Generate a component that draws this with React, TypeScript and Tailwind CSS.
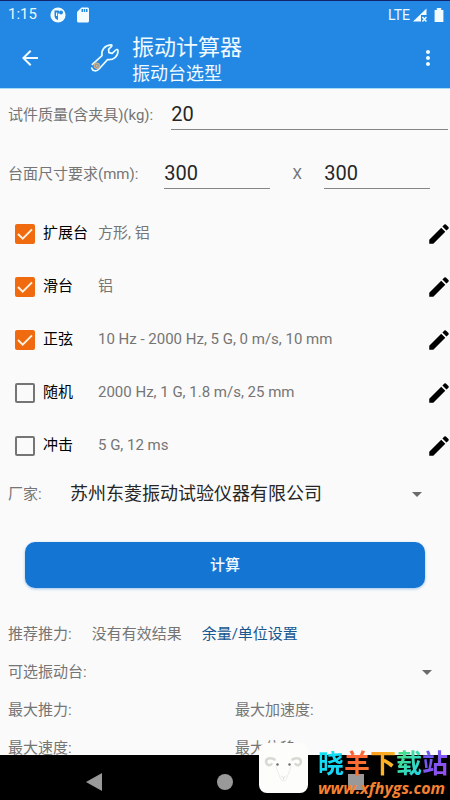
import { useState } from "react";
import { MdArrowBack, MdEdit, MdMoreVert, MdSdCard } from "react-icons/md";

type TestItem = {
  id: string;
  name: string;
  params: string;
  checked: boolean;
};

const initialItems: TestItem[] = [
  { id: "expander", name: "扩展台", params: "方形, 铝", checked: true },
  { id: "slip", name: "滑台", params: "铝", checked: true },
  {
    id: "sine",
    name: "正弦",
    params: "10 Hz - 2000 Hz, 5 G, 0 m/s, 10 mm",
    checked: true,
  },
  {
    id: "random",
    name: "随机",
    params: "2000 Hz, 1 G, 1.8 m/s, 25 mm",
    checked: false,
  },
  { id: "shock", name: "冲击", params: "5 G, 12 ms", checked: false },
];

const siteName = [
  { char: "晓", color: "from-[#12e4f6] to-[#18d0f4]" },
  { char: "羊", color: "from-[#ff5a3c] to-[#fb7c28]" },
  { char: "下", color: "from-[#ff9a1e] to-[#f7c52a]" },
  { char: "载", color: "from-[#4fe070] to-[#20d2ec]" },
  { char: "站", color: "from-[#5a5cf2] to-[#a04cf0]" },
];

const WrenchIcon = () => (
  <svg viewBox="0 0 30 30" className="h-[30px] w-[30px]" fill="none">
    <path
      d="M2.4 21.4L12 12.6C11 7 14.500 2.600 20.800 1.900C22 1.800 22.300 2.600 21.500 3.400L18.600 6.400L18.900 9.600L22.200 10.400L25.800 7C26.800 6 28 6.600 28 8C28 13.500 23.500 17.400 17.500 16.600L9 26C6.600 28.800 2.500 28.200 1.700 25"
      stroke="#e8fbff"
      strokeWidth="1.7"
      strokeLinejoin="round"
      strokeLinecap="round"
    />
    <circle cx="6.800" cy="22.800" r="2.600" fill="#8b9aa0" stroke="#cfae8c" strokeWidth="1.200" />
    <circle cx="6.800" cy="22.800" r="0.800" fill="#e8c8a0" />
  </svg>
);

const StatusBar = () => (
  <div className="flex h-7 items-center justify-between border-t border-[#12246b] pr-1.5 pl-2 text-[#e8f8ff]">
    <div className="flex items-center">
      <span className="w-10 text-[15px]">1:15</span>
      <svg viewBox="0 0 16 16" className="ml-0.5 h-4 w-4">
        <circle cx="8" cy="8" r="7.6" fill="#f2fcff" />
        <path d="M4.500 3.500h4.500v3h-1v6.500a4.800 4.800 0 0 1-3.500-5z" fill="#2288e4" />
        <circle cx="11" cy="5.600" r="2" fill="#2288e4" />
        <path d="M6 5.400h1.200v3.600H6z" fill="#f2fcff" />
      </svg>
      <MdSdCard className="ml-2 h-[18px] w-[18px] text-[#f2fcff]" />
    </div>
    <div className="flex items-center">
      <span className="text-sm">LTE</span>
      <svg viewBox="0 0 16 16" className="ml-0.5 h-4 w-4">
        <path d="M1 14.500L14.500 1.500V8H9V14.500Z" fill="#f2fcff" />
        <path d="M10.400 10l4 4.400M14.400 10l-4 4.400" stroke="#f2fcff" strokeWidth="1.500" />
      </svg>
      <svg viewBox="0 0 10 16" className="ml-1.5 h-4 w-2.5">
        <path d="M0.600 3h2.200V1h4.400v2h2.200v12H0.600z" fill="#f2fcff" />
      </svg>
    </div>
  </div>
);

const Header = () => (
  <header className="shrink-0 border-b border-[#a5dcf5] bg-[#2288e4] text-[#f0faff]">
    <StatusBar />
    <div className="flex h-[60px] items-center pr-2.5 pl-[18px]">
      <button aria-label="返回">
        <MdArrowBack className="h-6 w-6" />
      </button>
      <div className="ml-12 flex flex-1 items-center gap-3">
        <WrenchIcon />
        <div className="pt-1">
          <h1 className="text-[22px] leading-7">振动计算器</h1>
          <p className="text-lg leading-6">振动台选型</p>
        </div>
      </div>
      <button aria-label="更多">
        <MdMoreVert className="h-6 w-6" />
      </button>
    </div>
  </header>
);

const Caret = () => (
  <svg viewBox="0 0 10 5" className="pointer-events-none absolute right-0 h-[5px] w-[10px]">
    <path d="M0 0h10L5 5z" fill="#6b6b6b" />
  </svg>
);

const inputStyle =
  "h-8 min-w-0 border-b border-[#858585] bg-transparent text-xl text-[#262626] outline-none";

const NavBar = () => (
  <nav className="relative flex h-[45px] shrink-0 items-center bg-black">
    <div className="flex flex-1 items-center justify-around px-7 pt-2">
      <button aria-label="后退">
        <svg viewBox="0 0 16 18" className="h-[18px] w-4">
          <path d="M0 9L16 0v18z" fill="#999" />
        </svg>
      </button>
      <button aria-label="主页">
        <svg viewBox="0 0 16 16" className="h-4 w-4">
          <circle cx="8" cy="8" r="8" fill="#999" />
        </svg>
      </button>
      <button aria-label="最近任务">
        <svg viewBox="0 0 16 16" className="h-4 w-4">
          <path d="M0 0h16v16H0z" fill="#999" />
        </svg>
      </button>
    </div>
    <div className="absolute right-0.5 bottom-0.5 flex items-end gap-2.5">
      <svg viewBox="0 0 49 50" className="mb-[5px] h-[50px] w-[49px]">
        <rect width="49" height="50" rx="8" fill="#fdfdfb" />
        <g fill="none" stroke="#d9d9d4" strokeLinecap="round">
          <path d="M15.500 16.500C11 14 6.500 15.500 7.200 19.500C7.800 22.500 11 23 12.500 21" strokeWidth="2.600" />
          <path d="M33.500 16.500C38 14 42.500 15.500 41.800 19.500C41.200 22.500 38 23 36.500 21" strokeWidth="2.600" />
          <path d="M17 23C18 28 20 31 21.500 35.500C22.500 38.500 26.500 38.500 27.500 35.500C29 31 31 28 32 23" strokeWidth="0.500" />
          <path d="M22.500 33l2 2 2-2M24.500 35v1.500" strokeWidth="0.800" />
        </g>
        <circle cx="18.500" cy="21.500" r="1.200" fill="#6a6a6a" />
        <circle cx="30.500" cy="21.500" r="1.200" fill="#6a6a6a" />
      </svg>
      <div className="font-bold">
        <p className="flex text-[26px] leading-7">
          {siteName.map(({ char, color }) => (
            <span
              key={char}
              className={`bg-linear-to-br bg-clip-text text-transparent ${color}`}
            >
              {char}
            </span>
          ))}
        </p>
        <p className="font-['Open_Sans'] text-base leading-5 text-[#f58232] italic">
          www.xfhygs.com
        </p>
      </div>
    </div>
  </nav>
);

const App = () => {
  const [items, setItems] = useState<TestItem[]>(initialItems);

  const toggleItem = (id: string) => {
    setItems(
      items.map((item) =>
        item.id === id ? { ...item, checked: !item.checked } : item
      )
    );
  };

  return (
    <div className="flex h-screen flex-col bg-[#fafafa] font-['Roboto','Noto_Sans_CJK_SC',sans-serif] text-[15px] text-[#757575]">
      <Header />
      <main className="min-h-0 flex-1 overflow-hidden">
        <div className="flex items-center gap-[18px] pt-[9px] pr-0.5 pl-2">
          <label htmlFor="mass" className="pt-0.5">
            试件质量(含夹具)(kg):
          </label>
          <input id="mass" defaultValue="20" className={`${inputStyle} flex-1`} />
        </div>
        <div className="mt-[27px] flex items-center pr-5 pl-2">
          <label htmlFor="width" className="pt-0.5">
            台面尺寸要求(mm):
          </label>
          <input
            id="width"
            defaultValue="300"
            className={`${inputStyle} ml-[26px] flex-1`}
          />
          <span className="w-[54px] pt-0.5 text-center">X</span>
          <input
            aria-label="台面尺寸要求"
            defaultValue="300"
            className={`${inputStyle} flex-1`}
          />
        </div>
        <ul className="mt-[18px]">
          {items.map((item) => (
            <li key={item.id} className="flex h-[53px] items-center pl-[15px]">
              <label className="flex w-[83px] items-center gap-2 text-black">
                <span className="relative flex">
                  <input
                    type="checkbox"
                    checked={item.checked}
                    onChange={() => toggleItem(item.id)}
                    className="h-5 w-5 appearance-none rounded-xs border-2 border-[#757575] checked:border-[#f06a10] checked:bg-[#f06a10]"
                  />
                  {item.checked && (
                    <svg
                      viewBox="0 0 20 20"
                      className="pointer-events-none absolute inset-0 h-5 w-5"
                    >
                      <path
                        d="M3 10l4.700 4.700 9.300-9.300"
                        fill="none"
                        stroke="#fff3e0"
                        strokeWidth="2"
                      />
                    </svg>
                  )}
                </span>
                {item.name}
              </label>
              <span className="flex-1">{item.params}</span>
              <button aria-label={`编辑${item.name}`}>
                <MdEdit className="-mr-0.5 h-[26px] w-[26px] text-black" />
              </button>
            </li>
          ))}
        </ul>
        <div className="flex h-11 items-center pr-7 pl-2">
          <label htmlFor="maker" className="w-[62px]">
            厂家:
          </label>
          <div className="relative flex flex-1 items-center">
            <select
              id="maker"
              className="w-full appearance-none text-lg text-[#262626] outline-none"
            >
              <option>苏州东菱振动试验仪器有限公司</option>
            </select>
            <Caret />
          </div>
        </div>
        <div className="px-[25px] pt-[26px]">
          <button className="h-[46px] w-full rounded-[10px] bg-[#1575d3] text-[15px] font-medium text-[#f0faff] shadow-[0_1px_3px_#1575d366]">
            计算
          </button>
        </div>
        <div className="mt-[27px] flex h-[38px] items-center gap-5 pl-2">
          <span>推荐推力:</span>
          <span>没有有效结果</span>
          <a href="#settings" className="text-[#17578f]">
            余量/单位设置
          </a>
        </div>
        <div className="flex h-[38px] items-center pr-[18px] pl-2">
          <label htmlFor="shaker">可选振动台:</label>
          <div className="relative flex flex-1 items-center">
            <select id="shaker" className="w-full appearance-none outline-none" />
            <Caret />
          </div>
        </div>
        <div className="grid grid-cols-2 pl-2 leading-[38px]">
          <span>最大推力:</span>
          <span className="pl-1.5">最大加速度:</span>
          <span>最大速度:</span>
          <span className="pl-1.5">最大位移:</span>
        </div>
      </main>
      <NavBar />
    </div>
  );
};

export default App;
